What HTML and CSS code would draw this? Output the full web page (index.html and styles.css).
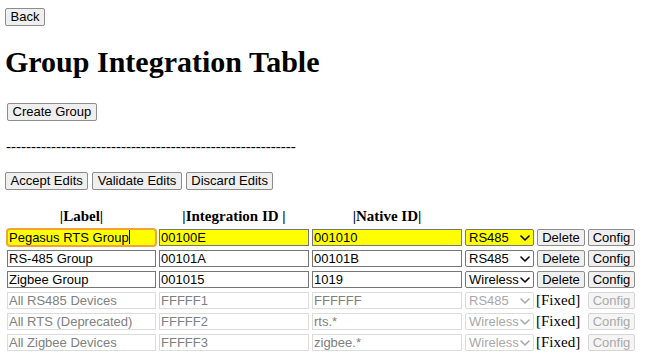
FILE: index.html
```html
<!DOCTYPE html>
<html>
<head>
<meta charset="utf-8">
<title>Group Integration Table</title>
<link rel="stylesheet" href="styles.css">
</head>
<body>
<div class="bar"><button class="btn">Back</button></div>
<h1 class="title">Group Integration Table</h1>
<div class="bar create"><button class="btn">Create Group</button></div>
<p class="dashes">----------------------------------------------------------</p>
<div class="bar actions">
  <button class="btn">Accept Edits</button>
  <button class="btn">Validate Edits</button>
  <button class="btn">Discard Edits</button>
</div>
<div class="grid">
  <div class="th">|Label|</div>
  <div class="th">|Integration ID |</div>
  <div class="th">|Native ID|</div>
  <div></div><div></div><div></div>

  <div class="field edited focused">Pegasus RTS Group<span class="caret"></span></div>
  <div class="field edited">00100E</div>
  <div class="field edited">001010</div>
  <div class="sel edited"><span>RS485</span><svg class="chev" viewBox="0 0 10 6"><path d="M1 1l4 4 4-4"/></svg></div>
  <button class="btn cell">Delete</button>
  <button class="btn cell">Config</button>

  <div class="field">RS-485 Group</div>
  <div class="field">00101A</div>
  <div class="field">00101B</div>
  <div class="sel"><span>RS485</span><svg class="chev" viewBox="0 0 10 6"><path d="M1 1l4 4 4-4"/></svg></div>
  <button class="btn cell">Delete</button>
  <button class="btn cell">Config</button>

  <div class="field">Zigbee Group</div>
  <div class="field">001015</div>
  <div class="field">1019</div>
  <div class="sel"><span>Wireless</span><svg class="chev" viewBox="0 0 10 6"><path d="M1 1l4 4 4-4"/></svg></div>
  <button class="btn cell">Delete</button>
  <button class="btn cell">Config</button>

  <div class="field off">All RS485 Devices</div>
  <div class="field off">FFFFF1</div>
  <div class="field off">FFFFFF</div>
  <div class="sel off"><span>RS485</span><svg class="chev" viewBox="0 0 10 6"><path d="M1 1l4 4 4-4"/></svg></div>
  <div class="fixed">[Fixed]</div>
  <button class="btn cell off">Config</button>

  <div class="field off">All RTS (Deprecated)</div>
  <div class="field off">FFFFF2</div>
  <div class="field off">rts.*</div>
  <div class="sel off"><span>Wireless</span><svg class="chev" viewBox="0 0 10 6"><path d="M1 1l4 4 4-4"/></svg></div>
  <div class="fixed">[Fixed]</div>
  <button class="btn cell off">Config</button>

  <div class="field off">All Zigbee Devices</div>
  <div class="field off">FFFFF3</div>
  <div class="field off">zigbee.*</div>
  <div class="sel off"><span>Wireless</span><svg class="chev" viewBox="0 0 10 6"><path d="M1 1l4 4 4-4"/></svg></div>
  <div class="fixed">[Fixed]</div>
  <button class="btn cell off">Config</button>
</div>
</body>
</html>
```
FILE: styles.css
```css
html, body {
  margin: 0;
  background: #fff;
}
body {
  padding: 8px 5px;
  font-family: "Liberation Serif", "Times New Roman", serif;
  font-size: 15px;
  color: #000;
}
.bar {
  display: flex;
  gap: 4px;
}
.btn {
  font-family: "Liberation Sans", Arial, sans-serif;
  font-size: 13px;
  line-height: 16px;
  height: 18px;
  padding: 0 4.5px;
  margin: 0;
  border: 1px solid #8d8d8d;
  border-radius: 2px;
  background: #efefef;
  color: #000;
  box-sizing: border-box;
}
.title {
  margin: 19px 0 0;
  font-size: 30px;
  line-height: 34px;
  font-weight: bold;
}
.create {
  margin-top: 24px;
  padding-left: 2px;
}
.dashes {
  margin: 17px 0 0;
  line-height: 17px;
  padding-left: 1px;
}
.actions {
  margin-top: 17px;
}
.grid {
  margin: 18px 0 0 2px;
  display: grid;
  grid-template-columns: 149px 150px 150px 69px 48px 47px;
  grid-auto-rows: 17px;
  column-gap: 3px;
  row-gap: 4px;
}
.th {
  font-weight: bold;
  text-align: center;
  line-height: 17px;
  white-space: pre;
}
.field, .sel {
  position: relative;
  box-sizing: border-box;
  border: 1px solid #767676;
  font-family: "Liberation Sans", Arial, sans-serif;
  font-size: 13px;
  line-height: 15px;
  padding: 0 1px;
  white-space: nowrap;
  overflow: hidden;
  background: #fff;
}
.sel {
  border-radius: 2px;
  padding-left: 3px;
}
.edited {
  background: #ffff00;
}
.focused {
  border-color: #f0a33a;
  box-shadow: 0 0 0 1px #f0a33a;
  border-radius: 3px;
  overflow: visible;
}
.caret {
  display: inline-block;
  width: 1px;
  height: 14px;
  background: #000;
  vertical-align: -2px;
}
.chev {
  position: absolute;
  right: 3px;
  top: 5px;
  width: 10px;
  height: 6px;
  fill: none;
  stroke: #000;
  stroke-width: 1.6;
  stroke-linecap: round;
  stroke-linejoin: round;
}
.off {
  color: #808080;
  border-color: #dcdcdc;
  background: #fff;
}
.sel.off {
  color: #a8a8a8;
}
.sel.off .chev {
  stroke: #a8a8a8;
}
.btn.cell {
  height: 17px;
  line-height: 15px;
  padding: 0;
  width: 100%;
}
.btn.off {
  color: #a9a9a9;
  border-color: #d6d6d6;
  background: #f5f5f5;
}
.fixed {
  line-height: 17px;
  padding-left: 0;
  margin-left: -1px;
  white-space: nowrap;
}
```
